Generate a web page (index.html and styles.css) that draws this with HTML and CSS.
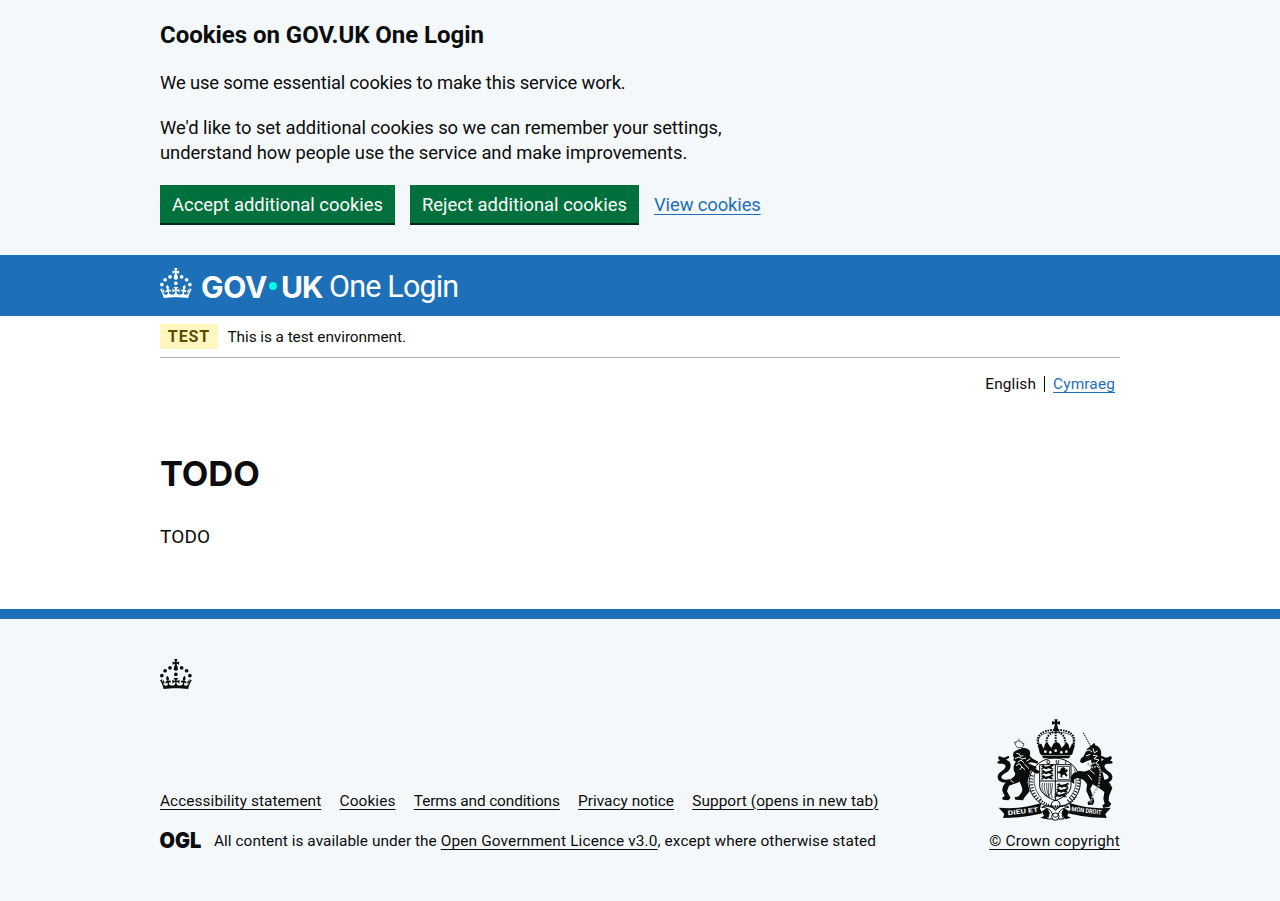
FILE: index.html
```html
<!DOCTYPE html>
<html lang="en">
<head>
<meta charset="utf-8">
<title>TODO - GOV.UK One Login</title>
<link rel="stylesheet" href="styles.css">
</head>
<body>
<svg class="defs" width="0" height="0" aria-hidden="true">
  <symbol id="crown" viewBox="0 0 64 60">
    <circle cx="20" cy="17.6" r="3.7"/><circle cx="10.2" cy="23.5" r="3.7"/><circle cx="3.7" cy="33.2" r="3.7"/><circle cx="31.7" cy="30.6" r="3.7"/><circle cx="43.3" cy="17.6" r="3.7"/><circle cx="53.2" cy="23.5" r="3.7"/><circle cx="59.7" cy="33.2" r="3.7"/>
    <path d="M33.1,9.8c.2-.1.3-.3.5-.5l4.6,2.4v-6.8l-4.6,1.5c-.1-.2-.3-.3-.5-.5l1.9-5.9h-6.7l1.9,5.9c-.2.1-.3.3-.5.5l-4.6-1.5v6.8l4.6-2.4c.1.2.3.3.5.5l-2.6,8c-.9,2.8,1.2,5.7,4.1,5.7h0c3,0,5.1-2.9,4.1-5.7l-2.6-8ZM37,37.9s-3.4,3.8-4.1,6.1c2.2,0,4.2-.5,6.4-2.8l-.7,8.5c-2-2.8-4.4-4.1-5.7-3.8.1,3.1.5,6.7,5.8,7.2,3.7.3,6.7-1.5,7-3.8.4-2.6-2-4.3-3.7-1.6-1.4-4.5,2.4-6.1,4.9-3.2-1.9-4.5-1.8-7.7,2.4-10.9,3,4,2.6,7.3-1.2,11.1,2.4-1.3,6.2,0,4,4.6-1.2-2.8-3.7-2.2-4.2.2-.3,1.7.7,3.7,3,4.2,1.9.3,4.7-.9,7-5.9-1.3,0-2.4.7-3.9,1.7l2.4-8c.6,2.3,1.4,3.7,2.2,4.5.6-1.6.5-2.8,0-5.3l5,1.8c-2.6,3.6-5.2,8.7-7.3,17.5-7.4-1.1-15.7-1.7-24.5-1.7h0c-8.8,0-17.1.6-24.5,1.7-2.1-8.9-4.7-13.9-7.3-17.5l5-1.8c-.5,2.5-.6,3.7,0,5.3.8-.8,1.6-2.3,2.2-4.5l2.4,8c-1.5-1-2.6-1.7-3.9-1.7,2.3,5,5.2,6.2,7,5.9,2.3-.4,3.3-2.4,3-4.2-.5-2.4-3-3.1-4.2-.2-2.2-4.6,1.6-6,4-4.6-3.7-3.7-4.2-7.1-1.2-11.1,4.2,3.2,4.3,6.4,2.4,10.9,2.5-2.8,6.3-1.3,4.9,3.2-1.8-2.7-4.1-1-3.7,1.6.3,2.3,3.3,4.1,7,3.8,5.4-.5,5.7-4.2,5.8-7.2-1.3-.2-3.7,1-5.7,3.8l-.7-8.5c2.2,2.3,4.2,2.7,6.4,2.8-.7-2.3-4.1-6.1-4.1-6.1h10.6Z"/>
  </symbol>
</svg>

<section class="cookie-banner" aria-label="Cookies on GOV.UK One Login">
  <div class="container">
    <h2 class="cookie-heading">Cookies on GOV.UK One Login</h2>
    <p class="body first">We use some essential cookies to make this service work.</p>
    <p class="body second">We'd like to set additional cookies so we can remember your settings,<br>understand how people use the service and make improvements.</p>
    <div class="button-group">
      <button class="button accept" type="button">Accept additional cookies</button>
      <button class="button reject" type="button">Reject additional cookies</button>
      <a class="link view" href="#">View cookies</a>
    </div>
  </div>
</section>

<header class="header">
  <div class="container header-inner">
    <svg class="crown" width="32" height="30"><use href="#crown"/></svg>
    <span class="wordmark"><span class="gov">GOV</span><span class="dot"></span><span class="uk">UK</span></span>
    <span class="product">One Login</span>
  </div>
</header>

<div class="container">
  <div class="phase-banner"><strong class="tag">TEST</strong><span class="phase-text">This is a test environment.</span></div>
  <nav class="languages"><span class="english">English</span><a class="link welsh" href="#">Cymraeg</a></nav>
  <main class="main">
    <h1 class="title">TODO</h1>
    <p class="body todo">TODO</p>
  </main>
</div>

<footer class="footer">
  <div class="container">
    <svg class="crown" width="32" height="30"><use href="#crown"/></svg>
    <div class="footer-row">
      <div class="footer-meta">
        <ul class="footer-links">
          <li><a class="accessibility" href="#">Accessibility statement</a></li>
          <li><a class="cookies" href="#">Cookies</a></li>
          <li><a class="terms" href="#">Terms and conditions</a></li>
          <li><a class="privacy" href="#">Privacy notice</a></li>
          <li><a class="support" href="#">Support (opens in new tab)</a></li>
        </ul>
        <div class="licence">
          <svg class="ogl" width="41" height="17" viewBox="0 0 41 17"><text x="-.5" y="15.2" textLength="41.8" lengthAdjust="spacingAndGlyphs">OGL</text></svg>
          <span class="licence-text"><span class="lic-a">All content is available under the </span><a class="lic-b" href="#">Open Government Licence v3.0</a><span class="lic-c">, except where otherwise stated</span></span>
        </div>
      </div>
      <div class="copyright">
        <svg class="arms" width="130" height="115" viewBox="0 0 390 345">
          <!-- crown -->
          <g class="ink">
            <path d="M193 22h10l-2 8 9-3v11l-9-3 4 19h-14l4-19-9 3V27l9 3z"/>
            <circle cx="198" cy="53" r="7"/>
            <path d="M146 97l8-2 7 15 4-14 7-6 5 9 7 9 6-13 9-6 10 6 6 13 8-9 5-9 7 6 4 14 7-15 9 3-8 28-4 4H155l-5-5-7-26z"/>
            <path d="M156 131h85l-4 8h-77z"/>
          </g>
          <g class="line crown-frame">
            <path d="M150 102c-15-30 10-43 48-40 38-3 62 10 48 40"/>
            <path class="beads" d="M144 96c-6-27 14-42 49-42M251 96c8-27-12-42-48-42"/>
            <path class="beads" d="M190 60c-17 7-21 21-21 34M205 60c17 7 21 21 21 34M197 60v32"/>
          </g>
          <g class="paper"><circle cx="166" cy="119" r="4"/><circle cx="181" cy="121" r="4"/><circle cx="197" cy="116" r="4"/><circle cx="214" cy="121" r="4"/><circle cx="229" cy="119" r="4"/></g>
          <!-- garter and quartered shield -->
          <ellipse class="line" cx="194" cy="212" rx="77" ry="74"/>
          <path class="garter" d="M127 190c-7 36 2 64 29 80M266 185c5 36-8 65-34 84"/>
          <path class="line thin" d="M139 170c-12 30-9 62 16 90M253 170c10 32 7 66-16 88"/>
          <text class="motto" x="169" y="155" textLength="60">QUI</text>
          <path class="shield" d="M149 158h94v66c-3 20-23 33-47 42-24-9-44-22-47-42z"/>
          <path class="line" d="M196 158v108M149 207h94"/>
          <g class="ink">
            <path id="lion-q" d="M153 162l8-3 5 5 13-3 8-4 4 5-7 2 3 5 5 2-8 1-8-3-8 3-6-3-7 5-2-4 5-3z"/>
            <use href="#lion-q" y="15"/><use href="#lion-q" y="30"/>
            <use href="#lion-q" x="47" y="55"/><use href="#lion-q" x="45" y="70"/><use href="#lion-q" x="40" y="84"/>
            <path d="M212 170l7-5 8 4-3 6 6-4 4 5-7 6 6 8-4 4-7-7-6 4 1 6-6-2 1-8-5-4-5 2-1-5 9-3z"/>
          </g>
          <rect class="line thin" x="203" y="163" width="35" height="39"/>
          <g class="line thin"><path d="M158 213c-6 16 1 31 14 40M164 213c-3 18 1 31 12 43M170 213c-1 18 2 31 10 45M176 213v40M181 213c2 17 1 30 6 45M187 213c1 15-2 31-12 40"/></g>
          <path class="garter-small" d="M151 262c12 13 24 18 38 21l36-2c14-5 25-15 33-27"/>
          <circle class="line" cx="197" cy="278" r="13"/>
          <!-- lion supporter -->
          <g class="line thin"><path d="M78 101l-5-11 6 2c-1-8 7-6 8-3 4-4 10 0 9 5l6 1-5 12H82zM87 86v-6"/></g>
          <g class="ink">
            <path d="M77 116c-10 4-9 17-5 21l-2 8 8 4c-8 9-10 24-3 33 2 7-2 13-9 17l-14 9c-9 7-16 17-15 28l7 16-8 6 3 5 16 2 7-7-11-20 6-17 21-7 11-5c5 13 11 21 6 32l-9 12-12 3 2 7 23 2 5-9 15-18-6-26c0-13 8-23 9-37l13 8c8 4 14 1 13-6l-12-6 4-5-7-4-20-9 12-2 17 4 3-6-17-9-9-9c6-18-8-24-22-23z"/>
            <path d="M61 208c-15 8-39 4-38-15 1-12 18-16 23-27 3-8-5-11-10-11-4 0-8 2-13-2-3-4 2-7 7-7l-5-6c-2-7 4-9 10-5 4 2 8 3 14-1 7-5 11 1 7 5l-8 4c16 4 18 21 8 33-6 7-21 11-22 19 1 8 13 10 25 6z"/>
          </g>
          <g class="cut"><path d="M79 124l9 2 3 7 9-2M75 140l12-5 9 6 12-3M83 151l10-7 9 9M78 161l10-6 8 10M89 174l7-9 9 8M61 204l10 8M85 227l7 13M103 156l14 14M121 140l-12 8"/></g>
          <!-- unicorn supporter -->
          <path class="line horn" d="M280 62l22 41"/>
          <g class="ink">
            <path d="M291 111l14-11 8-8 3 8c13 3 20 16 17 32 3 21 1 29-5 38l10 12 5 21 16 10 8 15-10 24-1 14 8 10-6 8-18 4-3-8 7-5-4-15 3-20-16-12-19-11-7 13 6 20 6 18-4 10-15 1-1-9 9-4-13-30 2-20-11-13-20-6-8 6 1 12-9-4-2-16 8-11 16-7 22 1 14-7 3-16-2-12-12 4-13 7-8-4 2-10 9-7z"/>
            <path d="M329 209c18 8 40 2 38-16-1-12-18-16-23-27-3-8 5-11 10-11 4 0 8 2 13-2 3-4-2-7-7-7l5-6c2-7-4-9-10-5-4 2-8 3-14-1-7-5-11 1-7 5l8 4c-16 4-18 21-8 33 6 7 21 11 22 19-1 8-13 10-25 6z"/>
          </g>
          <g class="cut"><path d="M280 119l18-5 8 6M288 132l13-5M309 109l4 14 10-7M309 130l13 2-10 8 15 4-10 10 10 5M300 158l15-6M260 168l22-4 15 7 17 15M268 175l16 2M294 188l12 16"/></g>
          <path class="chain" d="M293 154l14 12 20-4 4 19-5 41-15 21-9 29"/>
          <!-- ribbon and rose -->
          <g class="ink">
            <path d="M26 287c42 4 82 0 128-14l-4 18 8 13c-33 8-75 14-119 14l4-12z"/>
            <path d="M363 287c-42 4-79 0-125-14l4 18-8 13c33 8 72 14 116 14l-4-12z"/>
            <path d="M156 298l15-10 9 16-11 18-18-5 11-5zM237 298l-15-10-8 16 11 18 18-5-11-5z"/>
          </g>
          <text class="scroll" x="54" y="310" textLength="92" lengthAdjust="spacingAndGlyphs" transform="rotate(-7 54 310)">DIEU ET</text>
          <text class="scroll" x="244" y="297" textLength="90" lengthAdjust="spacingAndGlyphs" transform="rotate(7 244 297)">MON DROIT</text>
          <g class="line"><path d="M155 286c20-9 28-5 41 9 13-14 27-18 41-9-20 1-30 9-33 25-2 6-12 6-15 0-4-18-17-24-34-25z"/><circle cx="196" cy="314" r="11"/><path d="M177 309l-5 12h16M216 309l5 12h-16"/></g>
        </svg>
        <a class="crown-copy" href="#">© Crown copyright</a>
      </div>
    </div>
  </div>
</footer>
</body>
</html>
```
FILE: styles.css
```css
* { box-sizing: border-box; }
body { margin: 0; background: #fff; color: #0b0c0c; font-family: Roboto, Arial, sans-serif; }
h1, h2, p, ul { margin: 0; padding: 0; }
.defs { display: block; }
.container { width: 960px; margin: 0 auto; }
.link { color: #1d70b8; text-decoration: underline; text-decoration-thickness: 1px; text-underline-offset: 4px; }

.cookie-banner { height: 255px; padding-top: 20px; background: #f4f8fb; }
.cookie-heading { font-size: 24px; line-height: 30px; font-weight: 700; letter-spacing: -.035px; margin-bottom: 20px; }
.body { font-size: 18.4px; line-height: 25px; }
.first { letter-spacing: -.15px; margin-bottom: 20px; }
.second { letter-spacing: -.05px; margin-bottom: 20px; }
.button-group { display: flex; align-items: flex-start; gap: 15px; }
.button { height: 40px; padding: 1px 0 0; border: 0; border-bottom: 2px solid #002d18; border-radius: 0; background: #00703c; color: #fff; font: 18.4px/37px Roboto, Arial, sans-serif; text-align: center; }
.accept { width: 235px; }
.reject { width: 229px; letter-spacing: .02px; }
.view { padding-top: 1px; font-size: 18.4px; line-height: 38px; letter-spacing: -.1px; text-underline-offset: 3px; }

.header { height: 61px; background: #1d70b8; color: #fff; }
.header-inner { display: flex; padding-top: 13px; }
.crown { display: block; flex: none; fill: currentColor; }
.wordmark { display: flex; margin-left: 9px; font: 700 30px/38px Inter, sans-serif; }
.gov { width: 67px; letter-spacing: -.2px; }
.dot { width: 8px; height: 8px; margin: 14px 4px 0 1px; border-radius: 50%; background: #00ffe0; }
.uk { width: 41px; letter-spacing: -1px; }
.product { margin-left: 7px; font-size: 30.5px; line-height: 38px; letter-spacing: -.82px; }

.phase-banner { display: flex; align-items: center; height: 42px; padding: 8px 0; border-bottom: 1px solid #b1b4b6; }
.tag { width: 58px; height: 25px; background: #fff7bf; color: #594d00; font-size: 16px; line-height: 25px; letter-spacing: .9px; text-align: center; }
.phase-text { margin-left: 9.5px; font-size: 15.4px; line-height: 20px; letter-spacing: -.07px; }
.languages { display: flex; justify-content: flex-end; height: 20px; margin-top: 16px; padding-right: 5px; font-size: 15.4px; line-height: 20px; }
.english { letter-spacing: .14px; }
.welsh { position: relative; margin-left: 17px; letter-spacing: .15px; text-underline-offset: 3px; }
.welsh::before { content: ""; position: absolute; left: -9px; top: 2px; width: 1px; height: 16px; background: #0b0c0c; }

.main { height: 215px; padding-top: 60px; }
.title { font: 700 34.5px/40px Inter, sans-serif; letter-spacing: -.1px; }
.todo { margin-top: 30px; font-size: 19px; letter-spacing: .15px; }

.footer { height: 292px; border-top: 10px solid #1d70b8; padding-top: 40px; background: #f4f8fb; font-size: 15.4px; line-height: 20px; }
.footer-row { display: flex; justify-content: space-between; align-items: flex-end; height: 162px; }
.footer a { color: #0b0c0c; }
.footer-meta a, .crown-copy { text-decoration: underline; text-decoration-thickness: 1px; text-underline-offset: 2.5px; }
.footer-links { display: flex; list-style: none; gap: 18.3px; margin-bottom: 20px; white-space: nowrap; }
.accessibility { letter-spacing: .07px; }
.cookies { letter-spacing: .1px; }
.terms { letter-spacing: -.11px; }
.support { letter-spacing: .06px; }
.licence { display: flex; align-items: center; height: 20px; }
.ogl { flex: none; margin-right: 13px; overflow: visible; }
.ogl text { font: 900 21.5px Inter, sans-serif; fill: #0b0c0c; }
.lic-a { letter-spacing: .04px; }
.lic-b { letter-spacing: .15px; }
.lic-c { letter-spacing: .09px; }
.copyright { display: flex; flex-direction: column; align-items: flex-end; width: 131px; }
.crown-copy { margin-top: 4px; letter-spacing: .2px; white-space: nowrap; }

.arms { display: block; overflow: visible; }
.ink { fill: #0b0c0c; }
.paper { fill: #f4f8fb; }
.line { fill: none; stroke: #0b0c0c; stroke-width: 3; }
.thin { stroke-width: 2; }
.beads { stroke-width: 6; stroke-dasharray: 5 3; }
.crown-frame { stroke-width: 2; }
.garter { fill: none; stroke: #0b0c0c; stroke-width: 10; stroke-dasharray: 3 6; }
.garter-small { fill: none; stroke: #0b0c0c; stroke-width: 5; stroke-dasharray: 4 3; }
.shield { fill: #f4f8fb; stroke: #0b0c0c; stroke-width: 3; }
.motto { font: 700 17px Roboto, sans-serif; }
.cut { fill: none; stroke: #f4f8fb; stroke-width: 3; }
.horn { stroke-dasharray: 5 2; }
.chain { fill: none; stroke: #a5a9ab; stroke-width: 6; stroke-dasharray: 5 3; }
.scroll { fill: #f4f8fb; font: 700 19px Roboto, sans-serif; }
```
